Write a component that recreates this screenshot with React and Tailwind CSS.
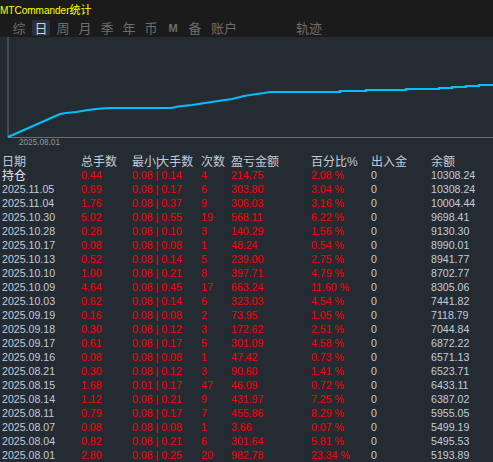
import React from "react";

const tabs = [
  { label: "综" },
  { label: "日", active: true },
  { label: "周" },
  { label: "月" },
  { label: "季" },
  { label: "年" },
  { label: "币" },
  { label: "M", small: true },
  { label: "备" },
  { label: "账户", wide: true },
];

const rows = [
  ["持仓", "0.44", "0.08 | 0.14", "4", "214.75", "2.08 %", "0", "10308.24"],
  ["2025.11.05", "0.69", "0.08 | 0.17", "6", "303.80", "3.04 %", "0", "10308.24"],
  ["2025.11.04", "1.76", "0.08 | 0.37", "9", "306.03", "3.16 %", "0", "10004.44"],
  ["2025.10.30", "5.02", "0.08 | 0.55", "19", "568.11", "6.22 %", "0", "9698.41"],
  ["2025.10.28", "0.28", "0.08 | 0.10", "3", "140.29", "1.56 %", "0", "9130.30"],
  ["2025.10.17", "0.08", "0.08 | 0.08", "1", "48.24", "0.54 %", "0", "8990.01"],
  ["2025.10.13", "0.52", "0.08 | 0.14", "5", "239.00", "2.75 %", "0", "8941.77"],
  ["2025.10.10", "1.00", "0.08 | 0.21", "8", "397.71", "4.79 %", "0", "8702.77"],
  ["2025.10.09", "4.64", "0.08 | 0.45", "17", "663.24", "11.60 %", "0", "8305.06"],
  ["2025.10.03", "0.62", "0.08 | 0.14", "6", "323.03", "4.54 %", "0", "7441.82"],
  ["2025.09.19", "0.16", "0.08 | 0.08", "2", "73.95", "1.05 %", "0", "7118.79"],
  ["2025.09.18", "0.30", "0.08 | 0.12", "3", "172.62", "2.51 %", "0", "7044.84"],
  ["2025.09.17", "0.61", "0.08 | 0.17", "5", "301.09", "4.58 %", "0", "6872.22"],
  ["2025.09.16", "0.08", "0.08 | 0.08", "1", "47.42", "0.73 %", "0", "6571.13"],
  ["2025.08.21", "0.30", "0.08 | 0.12", "3", "90.60", "1.41 %", "0", "6523.71"],
  ["2025.08.15", "1.68", "0.01 | 0.17", "47", "46.09", "0.72 %", "0", "6433.11"],
  ["2025.08.14", "1.12", "0.08 | 0.21", "9", "431.97", "7.25 %", "0", "6387.02"],
  ["2025.08.11", "0.79", "0.08 | 0.17", "7", "455.86", "8.29 %", "0", "5955.05"],
  ["2025.08.07", "0.08", "0.08 | 0.08", "1", "3.66", "0.07 %", "0", "5499.19"],
  ["2025.08.04", "0.82", "0.08 | 0.21", "6", "301.64", "5.81 %", "0", "5495.53"],
  ["2025.08.01", "2.80", "0.08 | 0.25", "20", "982.78", "23.34 %", "0", "5193.89"],
];

// balance curve, page coords shifted up by the 37px header
const curve = [
  [8, 137], [60, 114], [66, 113], [76, 112], [85, 110.5], [92, 109.5], [101, 108.5],
  [111, 108], [171, 108], [178, 106.5], [192, 105], [205, 103], [218, 101], [232, 99],
  [244, 96], [250, 95], [257, 94], [264, 93], [270, 92], [340, 92], [340, 91], [366, 91],
  [366, 90], [406, 90], [406, 89], [439, 89], [439, 88], [452, 88], [452, 87], [466, 87],
  [466, 86], [479, 86], [479, 85], [493, 85],
]
  .map(([x, y]) => `${x},${y - 37}`)
  .join(" ");

const cols = "grid grid-cols-[79px_51px_69px_30px_80px_60px_60px_1fr] pl-[2px]";
const cjk = { fontFamily: '"Noto Sans CJK SC", sans-serif' };
const latin = { fontFamily: '"Liberation Sans", Arial, sans-serif' };

export default function App() {
  return (
    <div className="w-[493px] h-[462px] overflow-hidden bg-[#252b33]">
      <div className="bg-[#1b1b1b]">
        <div className="h-[16px] leading-[16px] text-[#ffff00] whitespace-nowrap">
          <span className="text-[10px]" style={latin}>MTCommander</span>
          <span className="text-[11px]" style={cjk}>统计</span>
        </div>
        <div className="flex pt-[4px] pb-[1px] pl-[10px]" style={cjk}>
          <div className="flex gap-[4px]">
            {tabs.map((t) => (
              <div
                key={t.label}
                className={`h-[16px] leading-[16px] text-center rounded-[2px] ${t.wide ? "w-[32px]" : "w-[18px]"} ${
                  t.active ? "bg-[#2a3039] text-[#c8d2dc]" : "text-[#6e6e6e]"
                } ${t.small ? "text-[11px] font-bold" : "text-[13px]"}`}
                style={t.small ? latin : undefined}
              >
                {t.label}
              </div>
            ))}
          </div>
          <div className="ml-[56px] h-[16px] leading-[16px] text-[13px] text-[#6e6e6e]">轨迹</div>
        </div>
      </div>

      <div className="h-[111px] flex flex-col">
        <svg width="493" height="101" className="block">
          <line x1="8" y1="0" x2="8" y2="100.5" stroke="#6e6e6e" strokeWidth="1" />
          <line x1="8" y1="100.5" x2="493" y2="100.5" stroke="#6e6e6e" strokeWidth="1" />
          <polyline points={curve} fill="none" stroke="#00bfff" strokeWidth="2.2" />
        </svg>
        <div className="pl-[19px] text-[8.2px] leading-[10px] text-[#8f9aa6]" style={latin}>
          2025.08.01
        </div>
      </div>

      <div className="pt-[5px]">
        <div className={`${cols} h-[15px] leading-[15px] text-[12px] text-[#c0cbd8] whitespace-nowrap`} style={cjk}>
          <div>日期</div>
          <div>总手数</div>
          <div>
            最小<span className="text-[#c0cbd8] tracking-[-2px]" style={latin}>|</span>大手数
          </div>
          <div>次数</div>
          <div>盈亏金额</div>
          <div>
            百分比<span style={latin}>%</span>
          </div>
          <div>出入金</div>
          <div>余额</div>
        </div>
        {rows.map((r, i) => (
          <div
            key={r[0]}
            className={`${cols} h-[14px] leading-[14px] text-[10.6px] whitespace-nowrap`}
            style={latin}
          >
            {i === 0 ? (
              <div className="text-[12px] leading-[14px] text-[#e4e8ec]" style={cjk}>{r[0]}</div>
            ) : (
              <div className="text-[#c0cbd8]">{r[0]}</div>
            )}
            <div className="text-[#ff0000]">{r[1]}</div>
            <div className="text-[#ff0000]">{r[2]}</div>
            <div className="text-[#ff0000]">{r[3]}</div>
            <div className="text-[#ff0000]">{r[4]}</div>
            <div className="text-[#ff0000]">{r[5]}</div>
            <div className="text-[#c0cbd8]">{r[6]}</div>
            <div className="text-[#c0cbd8]">{r[7]}</div>
          </div>
        ))}
      </div>
    </div>
  );
}
